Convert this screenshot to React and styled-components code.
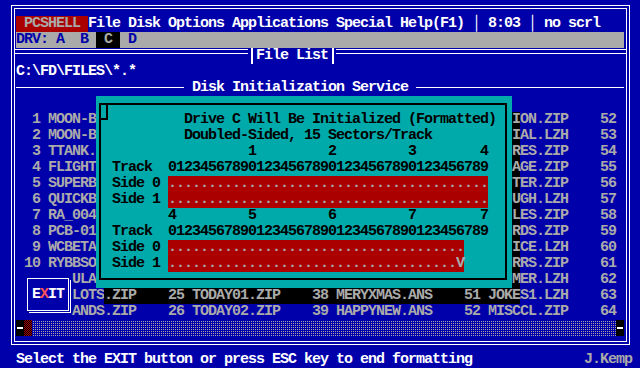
import styled, { createGlobalStyle } from "styled-components";

const BLUE = "#0000aa";
const GRAY = "#aaaaaa";
const RED = "#aa0000";
const TEAL = "#00aaaa";

const GlobalStyle = createGlobalStyle`
  html, body {
    margin: 0;
    padding: 0;
    background: ${BLUE};
  }
`;

const Screen = styled.div`
  width: 640px;
  height: 368px;
  overflow: hidden;
  background: ${BLUE};
  color: #fff;
  font-family: "Liberation Mono", "DejaVu Sans Mono", monospace;
  font-size: 15px;
  font-weight: bold;
  letter-spacing: -1px;
  line-height: 16px;
  white-space: pre;
  display: flex;
  flex-direction: column;
`;

const Frame = styled.div`
  box-sizing: border-box;
  width: 619px;
  height: 340px;
  margin: 5px 0 0 11px;
  padding: 10px 5px 0 4px;
  border: 1px solid #fff;
  box-shadow: inset 0 0 0 2px ${BLUE}, inset 0 0 0 3px #fff;
  display: flex;
  flex-direction: column;
`;

const MenuBar = styled.div`
  display: flex;
  height: 16px;
`;

const AppBadge = styled.span`
  background: ${RED};
  color: ${GRAY};
`;

const DriveBar = styled.div`
  display: flex;
  height: 16px;
  background: ${GRAY};
  color: ${BLUE};
`;

const DriveActive = styled.span`
  background: #000;
  color: ${GRAY};
`;

const Divider = styled.div`
  display: flex;
  height: 16px;
  margin: 0 -2px;
`;

const DoubleRule = styled.span`
  box-sizing: border-box;
  height: 5px;
  margin-top: 1px;
  border-top: 1px solid #fff;
  border-bottom: 1px solid #fff;
  width: ${(p) => (p.$w ? `${p.$w}px` : "auto")};
  flex: ${(p) => (p.$w ? "none" : 1)};
`;

const TitleTab = styled.span`
  position: relative;
  box-sizing: border-box;
  width: 88px;
  padding-left: 8px;

  &::before,
  &::after {
    content: "";
    position: absolute;
    top: 0;
    bottom: 0;
    width: 2px;
    background: #fff;
  }
  &::before {
    left: 3px;
  }
  &::after {
    right: 2px;
  }
`;

const PathLine = styled.div`
  height: 16px;
`;

const SectionRule = styled.div`
  display: flex;
  height: 16px;
`;

const Rule = styled.span`
  height: 1px;
  margin-top: 7px;
  background: #fff;
  width: ${(p) => (p.$w ? `${p.$w}px` : "auto")};
  flex: ${(p) => (p.$w ? "none" : 1)};
`;

const ListArea = styled.div`
  position: relative;
  height: 224px;
`;

const ListRow = styled.div`
  display: flex;
  height: 16px;
  color: ${GRAY};
`;

// the part of a row that sits under the dialog or the EXIT button
const Covered = styled.span`
  flex: none;
  width: ${(p) => p.$cols * 8}px;
`;

const Shade = styled.span`
  background: #000;
`;

const Dialog = styled.div`
  position: absolute;
  left: 80px;
  top: 0;
  width: 416px;
  height: 192px;
  box-sizing: border-box;
  padding: 7px 5px 8px 3px;
  background: ${TEAL};
  color: #000;
  display: flex;
`;

const DialogFrame = styled.div`
  position: relative;
  flex: 1;
  border: 2px solid #000;
  padding: 7px 0 0 3px;
`;

const CloseBox = styled.span`
  position: absolute;
  top: -2px;
  left: -2px;
  box-sizing: border-box;
  width: 9px;
  height: 17px;
  border: 2px solid #000;
`;

const DialogLine = styled.div`
  display: flex;
  height: 16px;
`;

const SectorBar = styled.span`
  background: ${RED};
  color: ${GRAY};
`;

const ExitButton = styled.div`
  position: absolute;
  left: 8px;
  top: 176px;
  box-sizing: border-box;
  width: 48px;
  height: 48px;
  padding: 6px 0 0 3px;
  background: ${BLUE};
`;

const ExitFace = styled.div`
  box-sizing: border-box;
  width: 42px;
  height: 33px;
  border: 1px solid #fff;
  box-shadow: 1px 1px 0 ${BLUE}, 2px 2px 0 #fff;
  display: flex;
  align-items: center;
  justify-content: center;
  font-size: 15px;
  letter-spacing: 0;
`;

const Letter = styled.span`
  width: 8px;
  text-align: center;
  color: ${(p) => (p.$hot ? "#ff5555" : "#fff")};
`;

const ScrollBar = styled.div`
  display: flex;
  height: 16px;
`;

const ScrollEnd = styled.span`
  position: relative;
  width: 8px;
  background: #000;

  &::after {
    content: "";
    position: absolute;
    left: 1px;
    right: 1px;
    top: 7px;
    height: 2px;
    background: #fff;
  }
`;

const ScrollThumb = styled.span`
  width: 8px;
  background: repeating-conic-gradient(${RED} 0 25%, #000 0 50%) 0 0 / 2px 2px;
`;

const ScrollTrack = styled.span`
  flex: 1;
  background-color: ${BLUE};
  background-image: conic-gradient(from 90deg at 1px 1px, ${GRAY} 90deg, transparent 0);
  background-size: 2px 2px;
`;

const StatusBar = styled.div`
  display: flex;
  justify-content: space-between;
  height: 16px;
  margin-top: 7px;
  padding: 0 8px 0 16px;
`;

const Credit = styled.span`
  color: ${GRAY};
`;

// text-mode helper: put strings at given cells of a blank line
const spread = (len, parts, offset = 0) => {
  const cells = Array(len).fill(" ");
  parts.forEach(([at, text]) => {
    [...text].forEach((ch, i) => {
      cells[at - offset + i] = ch;
    });
  });
  return cells.join("");
};

// rows behind the dialog: left part (cols 2-11), right part (cols 64-77)
const dialogRows = [
  ["", ""],
  ["  1 MOON-B", "ION.ZIP    52 "],
  ["  2 MOON-B", "IAL.LZH    53 "],
  ["  3 TTANK.", "RES.ZIP    54 "],
  ["  4 FLIGHT", "AGE.ZIP    55 "],
  ["  5 SUPERB", "TER.ZIP    56 "],
  ["  6 QUICKB", "UGH.LZH    57 "],
  ["  7 RA_004", "LES.ZIP    58 "],
  ["  8 PCB-01", "RDS.ZIP    59 "],
  ["  9 WCBETA", "ICE.LZH    60 "],
  [" 10 RYBBSO", "RRS.ZIP    61 "],
];

const TRACKS = "0123456789".repeat(4);

const row18 = spread(
  65,
  [[13, ".ZIP"], [21, "25"], [24, "TODAY01.ZIP"], [39, "38"], [42, "MERYXMAS.ANS"], [58, "51"], [61, "JOKES1.LZH"], [75, "63"]],
  13
);
const row19 = spread(
  69,
  [[9, "ANDS.ZIP"], [21, "26"], [24, "TODAY02.ZIP"], [39, "39"], [42, "HAPPYNEW.ANS"], [58, "52"], [61, "MISCCL.ZIP"], [75, "64"]],
  9
);

const App = () => {
  return (
    <Screen>
      <GlobalStyle />
      <Frame>
        <MenuBar>
          <AppBadge>{" PCSHELL "}</AppBadge>
          {"File Disk Options Applications Special Help(F1) │ 8:03 │ no scrl"}
        </MenuBar>
        <DriveBar>
          {"DRV: A  B "}
          <DriveActive>{" C "}</DriveActive>
          {" D"}
        </DriveBar>
        <Divider>
          <DoubleRule $w={234} />
          <TitleTab>File List</TitleTab>
          <DoubleRule />
        </Divider>
        <PathLine>{"C:\\FD\\FILES\\*.*"}</PathLine>
        <SectionRule>
          <Rule $w={168} />
          {" Disk Initialization Service "}
          <Rule />
        </SectionRule>
        <ListArea>
          {dialogRows.map(([left, right], i) => (
            <ListRow key={i}>
              <Covered $cols={10}>{left}</Covered>
              <Covered $cols={52} />
              {right && <Shade>{right[0]}</Shade>}
              {right.slice(1)}
            </ListRow>
          ))}
          <ListRow>
            <Covered $cols={7} />
            {"ULA"}
            <Covered $cols={52} />
            <Shade>M</Shade>
            {"ER.LZH    62 "}
          </ListRow>
          <ListRow>
            <Covered $cols={7} />
            {"LOTS"}
            <Shade>{row18.slice(0, 52)}</Shade>
            {row18.slice(52)}
          </ListRow>
          <ListRow>
            <Covered $cols={7} />
            {row19}
          </ListRow>
          <Dialog>
            <DialogFrame>
              <CloseBox />
              <DialogLine>{"          Drive C Will Be Initialized (Formatted)"}</DialogLine>
              <DialogLine>{"          Doubled-Sided, 15 Sectors/Track"}</DialogLine>
              <DialogLine>{spread(48, [[18, "1"], [28, "2"], [38, "3"], [47, "4"]])}</DialogLine>
              <DialogLine>{" Track  " + TRACKS}</DialogLine>
              <DialogLine>
                {" Side 0 "}
                <SectorBar>{".".repeat(40)}</SectorBar>
              </DialogLine>
              <DialogLine>
                {" Side 1 "}
                <SectorBar>{".".repeat(40)}</SectorBar>
              </DialogLine>
              <DialogLine>{spread(48, [[8, "4"], [18, "5"], [28, "6"], [38, "7"], [47, "7"]])}</DialogLine>
              <DialogLine>{" Track  " + TRACKS}</DialogLine>
              <DialogLine>
                {" Side 0 "}
                <SectorBar>{".".repeat(37)}</SectorBar>
              </DialogLine>
              <DialogLine>
                {" Side 1 "}
                <SectorBar>{".".repeat(36) + "V"}</SectorBar>
              </DialogLine>
            </DialogFrame>
          </Dialog>
          <ExitButton>
            <ExitFace>
              <Letter>E</Letter>
              <Letter $hot>X</Letter>
              <Letter>I</Letter>
              <Letter>T</Letter>
            </ExitFace>
          </ExitButton>
        </ListArea>
        <ScrollBar>
          <ScrollEnd />
          <ScrollThumb />
          <ScrollTrack />
          <ScrollEnd />
        </ScrollBar>
      </Frame>
      <StatusBar>
        {"Select the EXIT button or press ESC key to end formatting"}
        <Credit>J.Kemp</Credit>
      </StatusBar>
    </Screen>
  );
};

export default App;
